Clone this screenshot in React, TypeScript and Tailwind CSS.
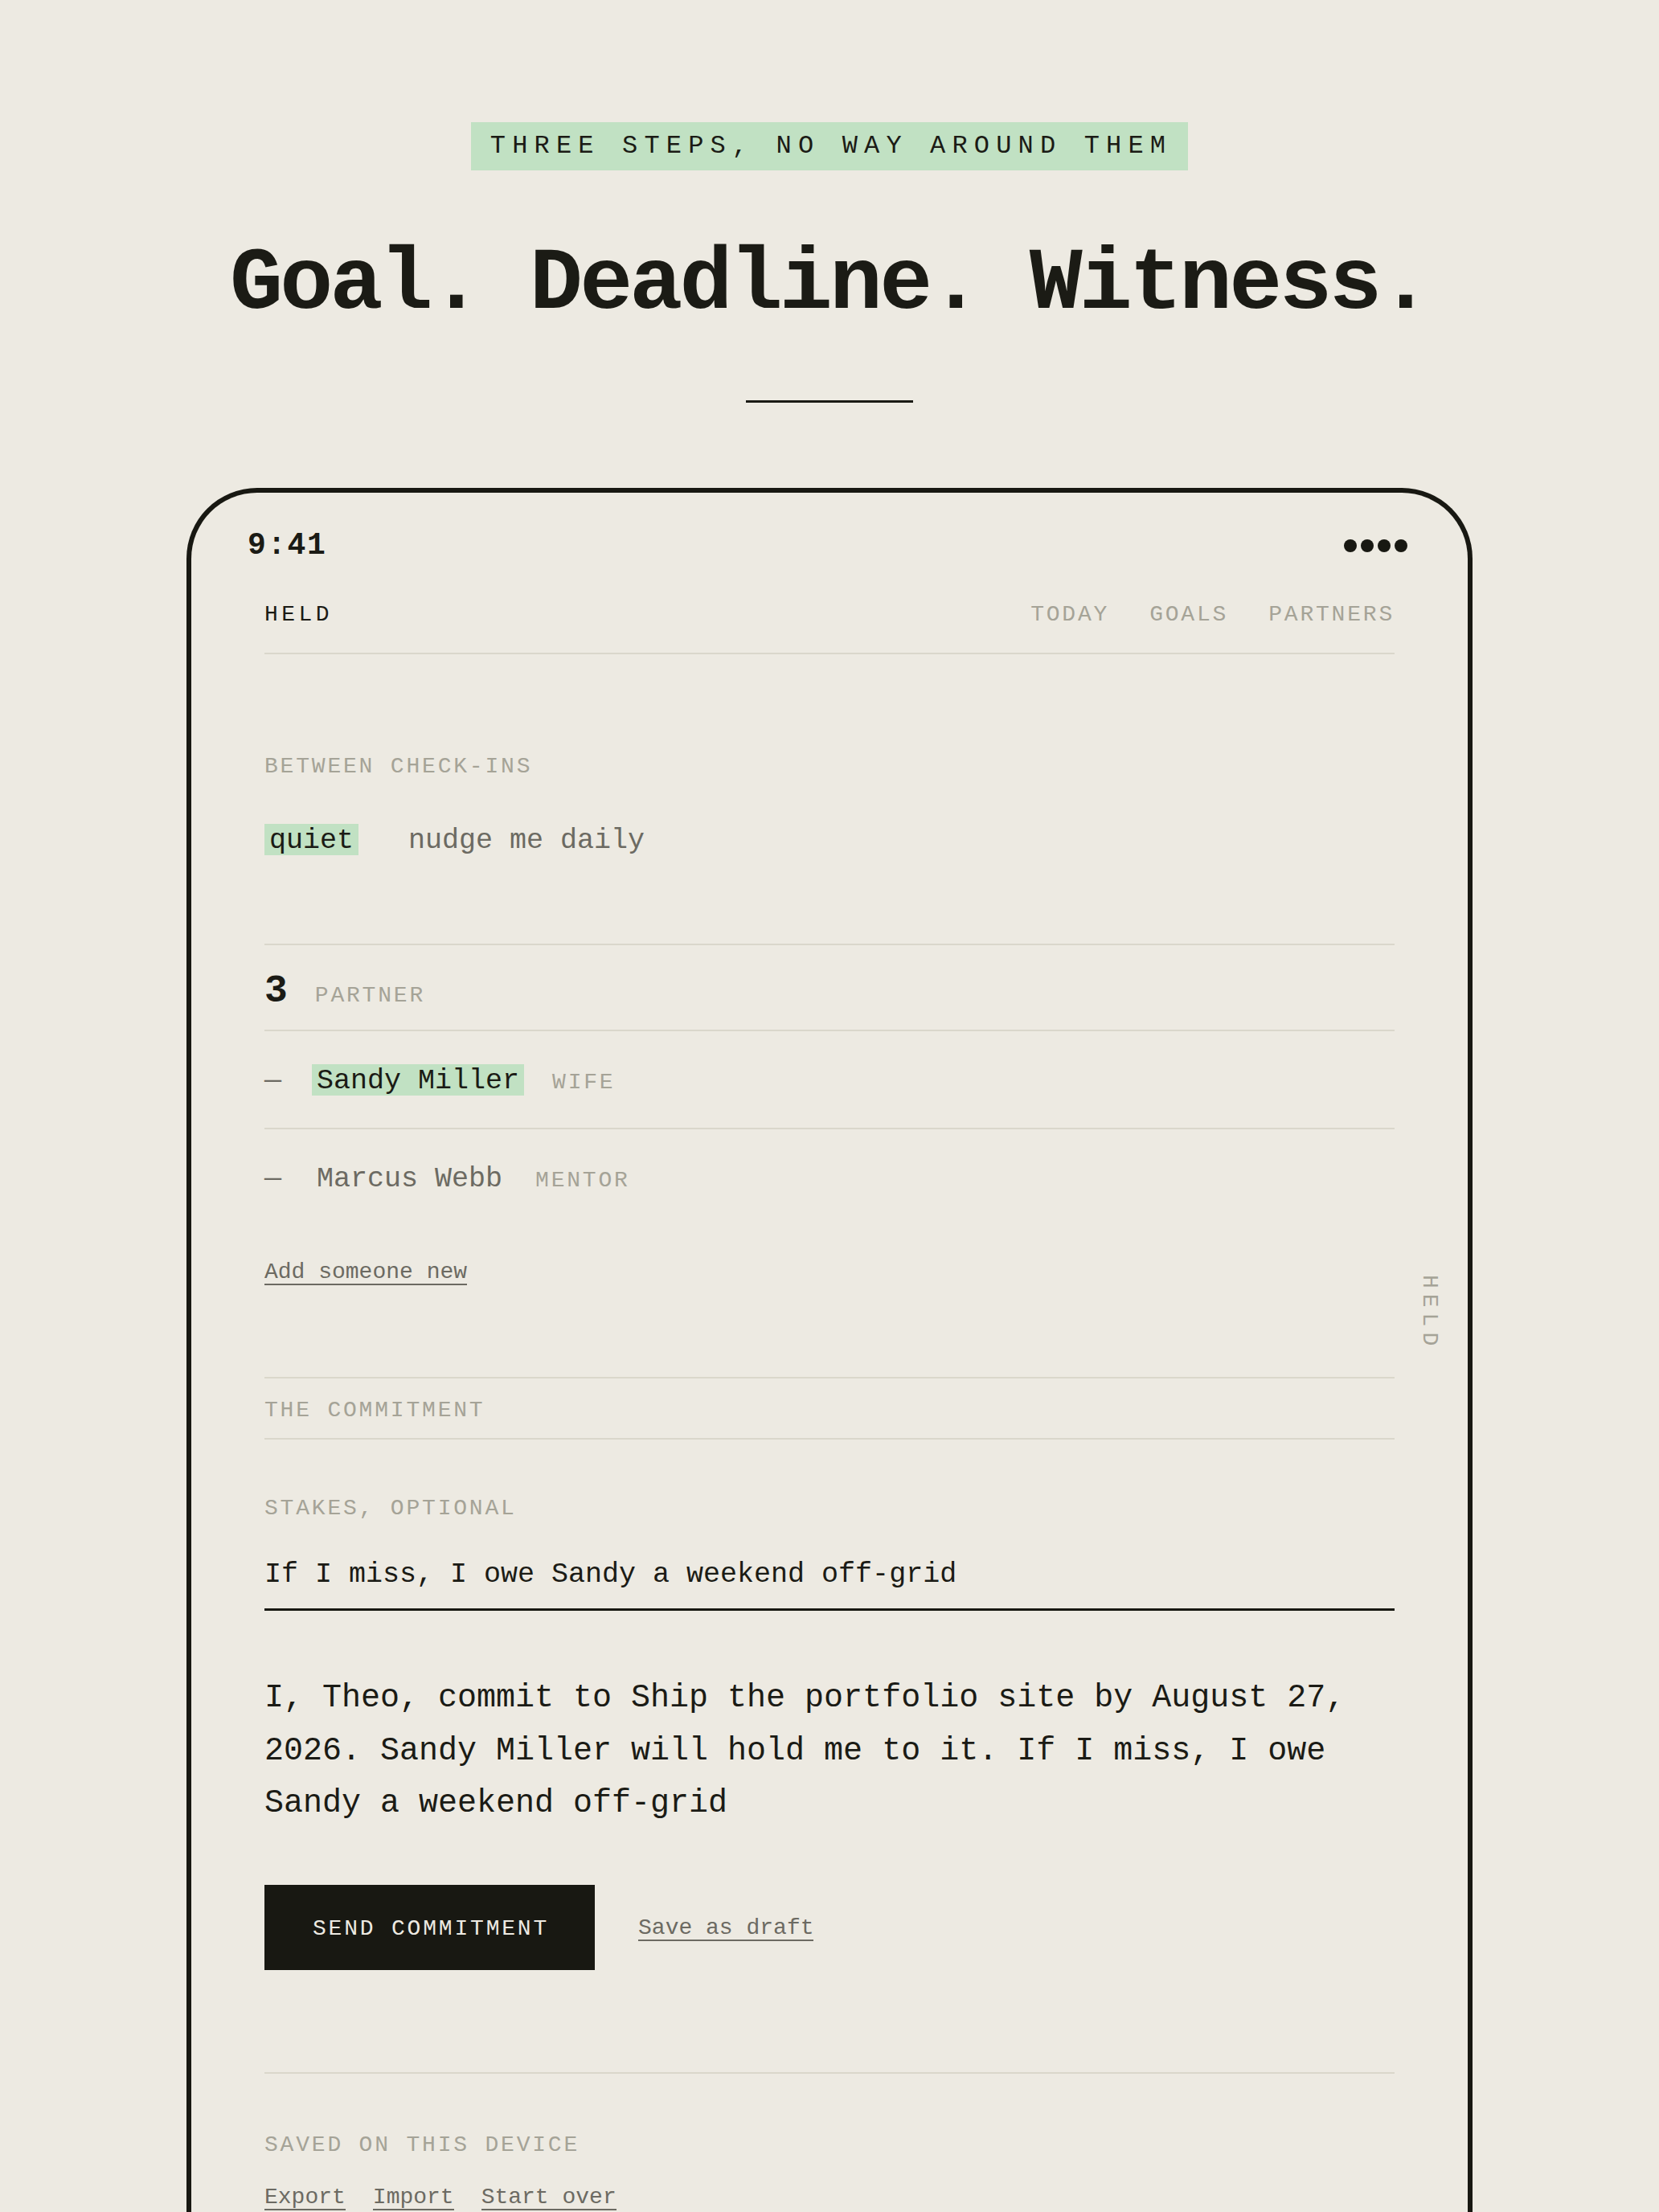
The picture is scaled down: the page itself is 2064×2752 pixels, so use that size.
const label = "text-[28px] leading-[28px] tracking-[0.1em] text-[#a5a397]";

const Chip = ({ children, on }: { children: string; on?: boolean }) => (
  <span
    className={
      on
        ? "inline-block bg-[#c1e1c3] px-[6px] pt-[3px] text-[35px] leading-[36px] text-[#1b1b15]"
        : "inline-block px-[6px] pt-[3px] text-[35px] leading-[36px] text-[#6c6a62]"
    }
  >
    {children}
  </span>
);

const PartnerRow = ({ name, role, on, last }: { name: string; role: string; on?: boolean; last?: boolean }) => (
  <div
    className={
      last
        ? "flex items-baseline pb-[40px] pt-[41px]"
        : "flex items-baseline border-b-2 border-[#dad7cb] pb-[40px] pt-[41px]"
    }
  >
    <span className="mr-[38px] inline-block pt-[3px] text-[35px] leading-[36px] text-[#6c6a62]">—</span>
    <Chip on={on}>{name}</Chip>
    <span className={"ml-[35px] " + label}>{role}</span>
  </div>
);

const Link = ({ children }: { children: string }) => (
  <span className="inline-block border-b-2 border-[#6c6a62] text-[28px] leading-[28px] text-[#6c6a62]">{children}</span>
);

export default function App() {
  return (
    <div className="h-[2752px] overflow-hidden bg-[#edeae2] font-['Liberation_Mono',monospace] text-[#1b1b15]">
      <div className="flex flex-col items-center pt-[152px]">
        <div className="flex h-[60px] items-center bg-[#c1e1c3] pl-[24px] pr-[20px] text-[32px] leading-none tracking-[0.255em]">
          THREE STEPS, NO WAY AROUND THEM
        </div>
        <h1 className="mt-[90px] text-[110px] font-bold leading-[104px] tracking-[-0.035em]">Goal. Deadline. Witness.</h1>
        <div className="mt-[92px] h-[3px] w-[208px] bg-[#1b1b15]" />

        <div className="relative mt-[106px] w-[1600px] rounded-t-[88px] border-[6px] border-b-0 border-[#181812] pb-[200px]">
          {/* status bar */}
          <div className="mt-[47px] flex h-[38px] items-center justify-between px-[70px]">
            <span className="text-[38px] font-bold leading-[38px] tracking-[0.05em]">9:41</span>
            <div className="flex gap-[5px] pr-[5px]">
              <span className="h-[16px] w-[16px] rounded-full bg-[#181812]" />
              <span className="h-[16px] w-[16px] rounded-full bg-[#181812]" />
              <span className="h-[16px] w-[16px] rounded-full bg-[#181812]" />
              <span className="h-[16px] w-[16px] rounded-full bg-[#181812]" />
            </div>
          </div>

          <div className="px-[91px]">
            {/* nav */}
            <div className="mt-[53px] flex justify-between border-b-2 border-[#dad7cb] pb-[33px]">
              <span className="text-[28px] leading-[28px] tracking-[0.16em] text-[#1b1b15]">HELD</span>
              <div className="flex gap-[50px]">
                <span className={label}>TODAY</span>
                <span className={label}>GOALS</span>
                <span className={label}>PARTNERS</span>
              </div>
            </div>

            <div className={"mt-[126px] " + label}>BETWEEN CHECK-INS</div>
            <div className="mt-[57px] flex gap-[56px]">
              <Chip on>quiet</Chip>
              <Chip>nudge me daily</Chip>
            </div>

            {/* partners */}
            <div className="mt-[110px] border-t-2 border-[#dad7cb]">
              <div className="flex items-baseline gap-[34px] border-b-2 border-[#dad7cb] pb-[24px] pt-[33px]">
                <span className="text-[48px] font-bold leading-[48px]">3</span>
                <span className={label}>PARTNER</span>
              </div>
              <PartnerRow name="Sandy Miller" role="WIFE" on />
              <PartnerRow name="Marcus Webb" role="MENTOR" last />
            </div>
            <div className="mt-[44px]">
              <Link>Add someone new</Link>
            </div>

            {/* commitment */}
            <div className="mt-[114px] border-y-2 border-[#dad7cb] pb-[20px] pt-[26px]">
              <div className={label}>THE COMMITMENT</div>
            </div>
            <div className={"mt-[72px] " + label}>STAKES, OPTIONAL</div>
            <div className="mt-[48px] border-b-[3px] border-[#181812] pb-[24px] pt-[3px] text-[35px] leading-[35px]">
              If I miss, I owe Sandy a weekend off-grid
            </div>
            <p className="mt-[76px] text-[40px] leading-[65.5px]">
              I, Theo, commit to Ship the portfolio site by August 27, 2026. Sandy Miller will hold me to it. If I miss, I owe Sandy a weekend off-grid
            </p>

            <div className="mt-[68px] flex items-center gap-[54px]">
              <div className="flex h-[106px] items-center bg-[#181812] pl-[60px] pr-[57px] pt-[5px] text-[28px] leading-[28px] tracking-[0.1em] text-[#edeae2]">
                SEND COMMITMENT
              </div>
              <div className="pt-[5px]">
                <Link>Save as draft</Link>
              </div>
            </div>

            <div className="mt-[127px] border-t-2 border-[#dad7cb]" />
            <div className={"mt-[75px] " + label}>SAVED ON THIS DEVICE</div>
            <div className="mt-[37px] flex gap-[34px]">
              <Link>Export</Link>
              <Link>Import</Link>
              <Link>Start over</Link>
            </div>
          </div>

          <span className="absolute right-[34px] top-[973px] text-[28px] leading-[28px] tracking-[0.25em] text-[#a5a397] [writing-mode:vertical-rl]">
            HELD
          </span>
        </div>
      </div>
    </div>
  );
}
